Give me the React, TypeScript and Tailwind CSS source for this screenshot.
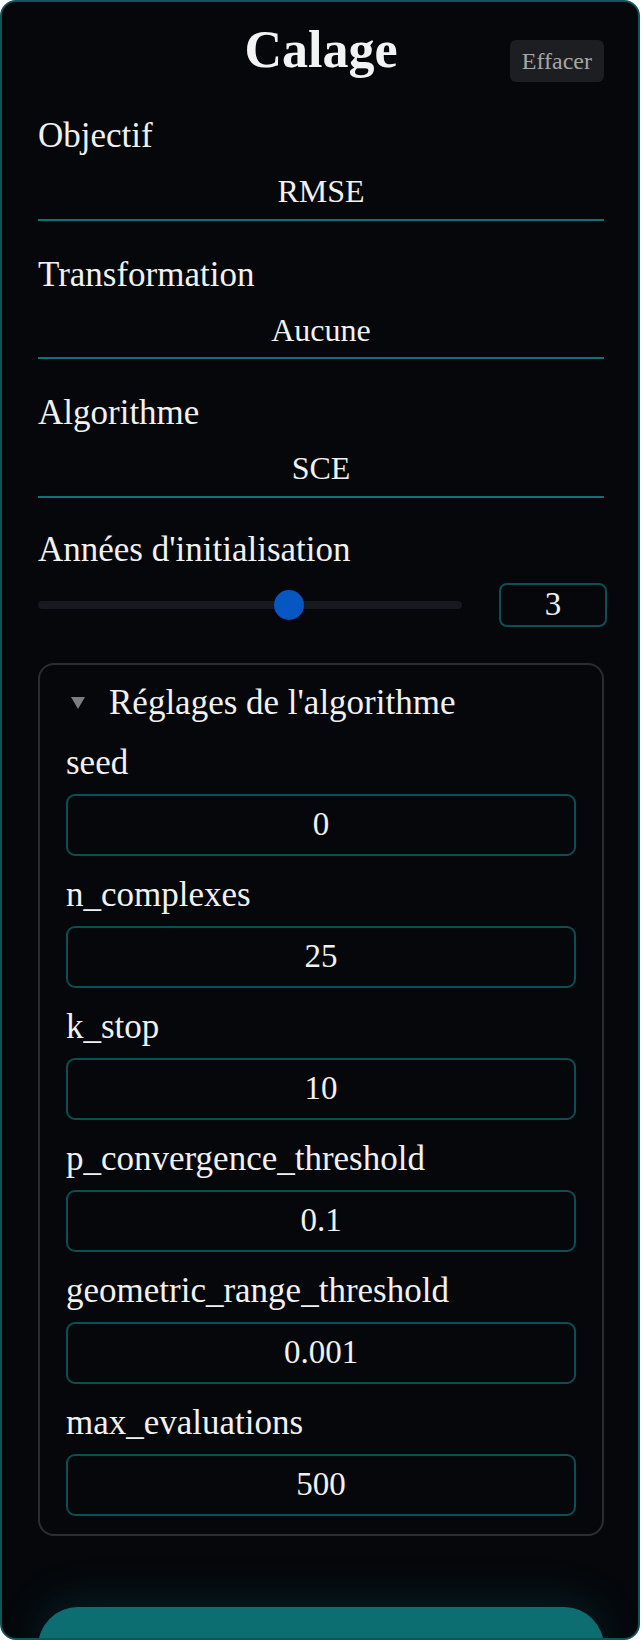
import { useState } from "react";

type Field = { name: string; value: string };

const fields: Field[] = [
  { name: "seed", value: "0" },
  { name: "n_complexes", value: "25" },
  { name: "k_stop", value: "10" },
  { name: "p_convergence_threshold", value: "0.1" },
  { name: "geometric_range_threshold", value: "0.001" },
  { name: "max_evaluations", value: "500" },
];

function SelectField({ label, value, first }: { label: string; value: string; first?: boolean }) {
  return (
    <div className={first ? "mt-[34px]" : "mt-[34px]"}>
      <div className="text-[35px] leading-[40px] text-[#f1f1f1]">{label}</div>
      <div className="mt-[15px] border-b-2 border-[#0f7275] pb-[7.5px] text-center text-[32px] leading-[40px] text-[#f1f1f1]">
        {value}
      </div>
    </div>
  );
}

export default function App() {
  const [years] = useState(3);
  const pct = (years / 5) * 100;

  return (
    <div className="h-[1640px] w-[640px] overflow-hidden rounded-[16px] border-2 border-[#0d5659] bg-[#05070b] pl-[36px] pr-[34px] pt-[22px] text-[#f1f1f1] [font-family:'Liberation_Serif',serif]">
      <div className="grid grid-cols-[1fr_auto_1fr] items-start">
        <div />
        <h1 className="text-[52px] font-bold leading-[52px] text-[#f3f3f3]">Calage</h1>
        <button className="mt-[16px] flex h-[42px] items-center justify-self-end rounded-[6px] bg-[#1d1e22] px-[12px] text-[24px] leading-none text-[#a6a6a6]">
          Effacer
        </button>
      </div>

      <SelectField label="Objectif" value="RMSE" first />
      <SelectField label="Transformation" value="Aucune" />
      <SelectField label="Algorithme" value="SCE" />

      <div className="mt-[32px] text-[35px] leading-[40px]">Années d'initialisation</div>
      <div className="mt-[13px] flex h-[44px] items-center gap-[37px]">
        <div className="relative h-[8px] flex-1 rounded-full bg-[#17191e]">
          <div
            className="absolute top-1/2 h-[30px] w-[30px] -translate-x-1/2 -translate-y-1/2 rounded-full bg-[#0657c2]"
            style={{ left: `calc(15px + (100% - 30px) * ${pct / 100})` }}
          />
        </div>
        <div className="-mr-[3px] flex h-[44px] w-[108px] items-center justify-center rounded-[8px] border-2 border-[#0c5053] text-[33px]">
          {years}
        </div>
      </div>

      <div className="mt-[36px] rounded-[16px] border-2 border-[#2b2d31] px-[26px] pb-[18px] pt-[18.5px]">
        <div className="flex h-[40px] items-center">
          <svg width="14" height="12" viewBox="0 0 14 12" className="ml-[5px]">
            <polygon points="0,0 14,0 7,12" fill="#7d7d7d" />
          </svg>
          <span className="ml-[24px] text-[35px] leading-[40px]">Réglages de l'algorithme</span>
        </div>
        {fields.map((f, i) => (
          <div key={f.name} className={i === 0 ? "mt-[20px]" : "mt-[19px]"}>
            <div className="text-[35px] leading-[40px]">{f.name}</div>
            <div className="mt-[11px] flex h-[62px] items-center justify-center rounded-[9px] border-2 border-[#0c4f52] text-[33px]">
              {f.value}
            </div>
          </div>
        ))}
      </div>

      <button className="mt-[71px] h-[80px] w-full rounded-full bg-[#0d6e71] shadow-[0_-8px_40px_rgba(13,110,113,0.22)]" />
    </div>
  );
}
